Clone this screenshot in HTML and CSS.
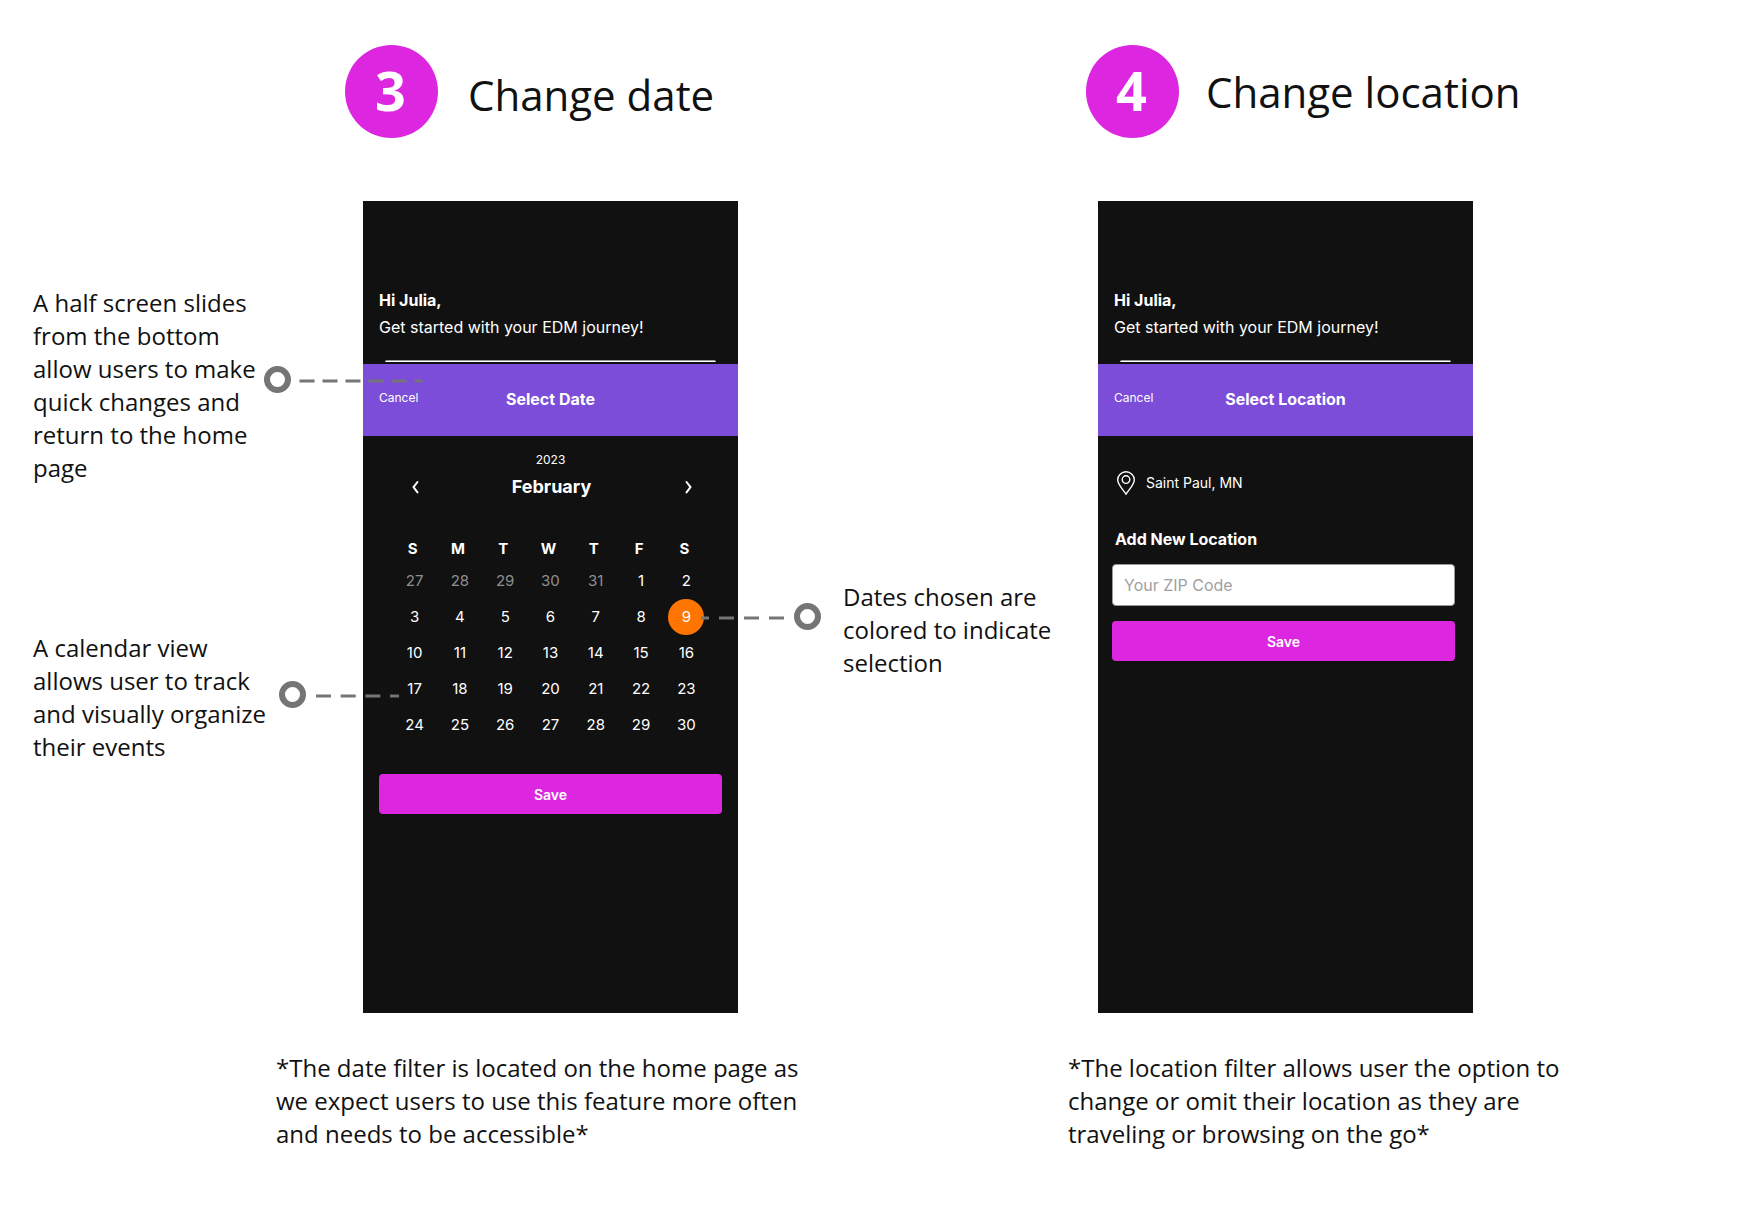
FILE: index.html
```html
<!DOCTYPE html>
<html lang="en">
<head>
<meta charset="utf-8">
<meta name="viewport" content="width=device-width, initial-scale=1">
<title>Change date and location</title>
<link rel="stylesheet" href="styles.css">
</head>
<body>
<main class="board">
  <section class="step step-date">
    <header class="step-header">
      <span class="step-number">3</span>
      <h1 class="step-title">Change date</h1>
    </header>
    <div class="stage">
      <div class="notes notes-left">
        <p class="note">A half screen slides from the bottom allow users to make quick changes and return to the home page
          <svg class="leader leader-sheet" width="160" height="27" viewBox="0 0 160 27" aria-hidden="true">
            <circle cx="13.5" cy="13.5" r="10.5"/>
            <path d="M35.5 15H158.5" stroke-dasharray="15 8"/>
          </svg>
        </p>
        <p class="note">A calendar view allows user to track and visually organize their events
          <svg class="leader leader-calendar" width="142" height="27" viewBox="0 0 142 27" aria-hidden="true">
            <circle cx="13.5" cy="13.5" r="10.5"/>
            <path d="M37 15H120" stroke-dasharray="15 9.7"/>
          </svg>
        </p>
      </div>

      <div class="phone">
        <div class="greeting">
          <p class="greeting-name">Hi Julia,</p>
          <p>Get started with your EDM journey!</p>
        </div>
        <div class="search-edge"></div>
        <div class="sheet-bar">
          <button class="cancel" type="button">Cancel</button>
          <h2 class="sheet-title">Select Date</h2>
        </div>
        <div class="calendar">
          <p class="year">2023</p>
          <div class="month-nav">
            <button class="arrow" type="button" aria-label="Previous month">
              <svg width="16" height="16" viewBox="0 0 16 16" aria-hidden="true"><path d="M10.5 3L6.5 8.2L10.5 13.4"/></svg>
            </button>
            <h3 class="month">February</h3>
            <button class="arrow" type="button" aria-label="Next month">
              <svg width="16" height="16" viewBox="0 0 16 16" aria-hidden="true"><path d="M6.5 3L10.5 8.2L6.5 13.4"/></svg>
            </button>
          </div>
          <table class="days">
            <thead>
              <tr><th>S</th><th>M</th><th>T</th><th>W</th><th>T</th><th>F</th><th>S</th></tr>
            </thead>
            <tbody>
              <tr>
                <td><button class="day outside" type="button">27</button></td>
                <td><button class="day outside" type="button">28</button></td>
                <td><button class="day outside" type="button">29</button></td>
                <td><button class="day outside" type="button">30</button></td>
                <td><button class="day outside" type="button">31</button></td>
                <td><button class="day" type="button">1</button></td>
                <td><button class="day" type="button">2</button></td>
              </tr>
              <tr>
                <td><button class="day" type="button">3</button></td>
                <td><button class="day" type="button">4</button></td>
                <td><button class="day" type="button">5</button></td>
                <td><button class="day" type="button">6</button></td>
                <td><button class="day" type="button">7</button></td>
                <td><button class="day" type="button">8</button></td>
                <td><button class="day selected" type="button" aria-pressed="true">9</button></td>
              </tr>
              <tr>
                <td><button class="day" type="button">10</button></td>
                <td><button class="day" type="button">11</button></td>
                <td><button class="day" type="button">12</button></td>
                <td><button class="day" type="button">13</button></td>
                <td><button class="day" type="button">14</button></td>
                <td><button class="day" type="button">15</button></td>
                <td><button class="day" type="button">16</button></td>
              </tr>
              <tr>
                <td><button class="day" type="button">17</button></td>
                <td><button class="day" type="button">18</button></td>
                <td><button class="day" type="button">19</button></td>
                <td><button class="day" type="button">20</button></td>
                <td><button class="day" type="button">21</button></td>
                <td><button class="day" type="button">22</button></td>
                <td><button class="day" type="button">23</button></td>
              </tr>
              <tr>
                <td><button class="day" type="button">24</button></td>
                <td><button class="day" type="button">25</button></td>
                <td><button class="day" type="button">26</button></td>
                <td><button class="day" type="button">27</button></td>
                <td><button class="day" type="button">28</button></td>
                <td><button class="day" type="button">29</button></td>
                <td><button class="day" type="button">30</button></td>
              </tr>
            </tbody>
          </table>
          <button class="save" type="button">Save</button>
        </div>
      </div>

      <div class="notes notes-right">
        <p class="note">Dates chosen are colored to indicate selection
          <svg class="leader leader-selected" width="121" height="27" viewBox="0 0 121 27" aria-hidden="true">
            <circle cx="107.5" cy="13.5" r="10.5"/>
            <path d="M84 15H1" stroke-dasharray="15 10"/>
          </svg>
        </p>
      </div>
    </div>
    <p class="note caption">*The date filter is located on the home page as we expect users to use this feature more often and needs to be accessible*</p>
  </section>

  <section class="step step-location">
    <header class="step-header">
      <span class="step-number">4</span>
      <h1 class="step-title">Change location</h1>
    </header>
    <div class="stage">
      <div class="phone">
        <div class="greeting">
          <p class="greeting-name">Hi Julia,</p>
          <p>Get started with your EDM journey!</p>
        </div>
        <div class="search-edge"></div>
        <div class="sheet-bar">
          <button class="cancel" type="button">Cancel</button>
          <h2 class="sheet-title">Select Location</h2>
        </div>
        <form class="location">
          <p class="place">
            <svg class="pin" width="20" height="24" viewBox="0 0 20 24" aria-hidden="true">
              <path d="M10 23.2C8.2 19.8 1.7 14.2 1.7 8.8A8.3 8 0 0 1 18.3 8.8C18.3 14.2 11.8 19.8 10 23.2Z"/>
              <circle cx="10" cy="8.6" r="3.8"/>
            </svg>
            Saint Paul, MN
          </p>
          <label class="location-label" for="zip">Add New Location</label>
          <input class="zip" id="zip" type="text" placeholder="Your ZIP Code">
          <button class="save" type="button">Save</button>
        </form>
      </div>
    </div>
    <p class="note caption">*The location filter allows user the option to change or omit their location as they are traveling or browsing on the go*</p>
  </section>
</main>
</body>
</html>
```
FILE: styles.css
```css
* {
  box-sizing: border-box;
}

body {
  margin: 0;
  background: #fff;
  color: #111;
  font-family: "Open Sans", sans-serif;
}

h1, h2, h3, p {
  margin: 0;
}

button {
  padding: 0;
  border: 0;
  background: none;
  color: inherit;
  font: inherit;
  cursor: pointer;
}

.board {
  display: grid;
  grid-template-columns: minmax(1000px, 1fr) 681px;
  padding: 45px 0 80px;
}

/* Step headings */
.step-header {
  display: flex;
  align-items: center;
  margin-bottom: 63px;
}

.step-date .step-header {
  align-items: baseline;
  gap: 30px;
  padding-left: 345px;
}

.step-location .step-header {
  gap: 27px;
  padding-left: 18px;
}

.step-number {
  display: flex;
  align-items: center;
  justify-content: center;
  width: 93px;
  height: 93px;
  padding: 0 2px 3px 0;
  border-radius: 50%;
  background: #dc26e0;
  color: #fff;
  font-size: 54px;
  font-weight: 700;
  line-height: 60px;
}

.step-title {
  font-size: 42px;
  font-weight: 400;
  line-height: 60px;
}

/* Phone with the notes on either side */
.step-date .stage {
  display: grid;
  grid-template-columns: 11fr 375px 10fr;
}

.step-location .stage {
  padding-left: 30px;
}

.notes {
  display: flex;
  flex-direction: column;
}

.notes-left {
  gap: 147px;
  padding: 85px 0 0 33px;
}

.notes-left .note {
  width: 236px;
}

.notes-right {
  padding: 379px 0 0 105px;
}

.note {
  position: relative;
  font-size: 24px;
  line-height: 33px;
}

.caption {
  width: 530px;
  margin-top: 38px;
}

.step-date .caption {
  margin-left: 276px;
}

/* Leader lines run from a note over the phone */
.leader {
  position: absolute;
  z-index: 1;
  fill: none;
  stroke: #757575;
}

.leader circle {
  stroke-width: 6;
}

.leader path {
  stroke-width: 3;
}

.leader-sheet {
  left: 231px;
  top: 80px;
}

.leader-calendar {
  left: 246px;
  top: 50px;
}

.leader-selected {
  left: -143px;
  top: 23px;
}

/* Phone */
.phone {
  width: 375px;
  min-height: 812px;
  background: #111;
  color: #fff;
  font-family: Inter, sans-serif;
  font-size: 16px;
}

.greeting {
  padding: 86px 16px 0;
  line-height: 27px;
}

.greeting-name {
  font-weight: 700;
}

.search-edge {
  height: 2px;
  margin: 19px 22px 2px;
  border-top: 1px solid #999;
  border-radius: 5px 5px 0 0;
  background: #fff;
}

.sheet-bar {
  display: grid;
  grid-template-columns: 1fr auto 1fr;
  align-items: center;
  height: 72px;
  padding: 0 16px;
  background: #7c4dd8;
}

.cancel {
  justify-self: start;
  padding-bottom: 4px;
  font-size: 12px;
  line-height: 16px;
}

.sheet-title {
  padding-bottom: 2px;
  font-size: 16px;
  line-height: 24px;
}

/* Calendar */
.calendar {
  padding: 16px 16px 0;
}

.year {
  font-size: 12px;
  line-height: 16px;
  text-align: center;
}

.month-nav {
  display: flex;
  align-items: center;
  justify-content: space-between;
  margin: 7px 26px 36px 28px;
}

.month {
  font-size: 18px;
  line-height: 24px;
}

.arrow {
  display: flex;
}

.arrow svg {
  fill: none;
  stroke: #fff;
  stroke-width: 2;
  stroke-linecap: round;
  stroke-linejoin: round;
}

.days {
  width: 317px;
  margin: 0 auto 31px;
  border-collapse: collapse;
  table-layout: fixed;
  font-size: 15px;
}

.days th {
  height: 28px;
  padding: 0 4px 2px 0;
}

.days td {
  height: 36px;
  padding: 0;
}

.day {
  display: block;
  width: 36px;
  height: 36px;
  margin: 0 auto;
  padding-bottom: 2px;
  border-radius: 50%;
}

.outside {
  color: #8f8f8f;
}

.selected {
  background: #ff7500;
}

.save {
  display: block;
  width: 100%;
  height: 40px;
  border-radius: 4px;
  background: #dc26e0;
  font-size: 14px;
  font-weight: 600;
}

/* Location form */
.location {
  padding: 35px 18px 0 14px;
}

.place {
  display: flex;
  align-items: center;
  gap: 10px;
  padding-left: 4px;
  font-size: 14px;
  line-height: 24px;
}

.pin {
  fill: none;
  stroke: #fff;
  stroke-width: 1.4;
}

.location-label {
  display: block;
  margin: 32px 0 13px;
  padding-left: 3px;
  font-weight: 700;
  line-height: 24px;
}

.zip {
  display: block;
  width: 100%;
  height: 42px;
  margin-bottom: 15px;
  padding: 0 11px;
  border: 1px solid #999;
  border-radius: 4px;
  background: #fff;
  color: #111;
  font: inherit;
}

.zip::placeholder {
  color: #a0a0a0;
}
```
